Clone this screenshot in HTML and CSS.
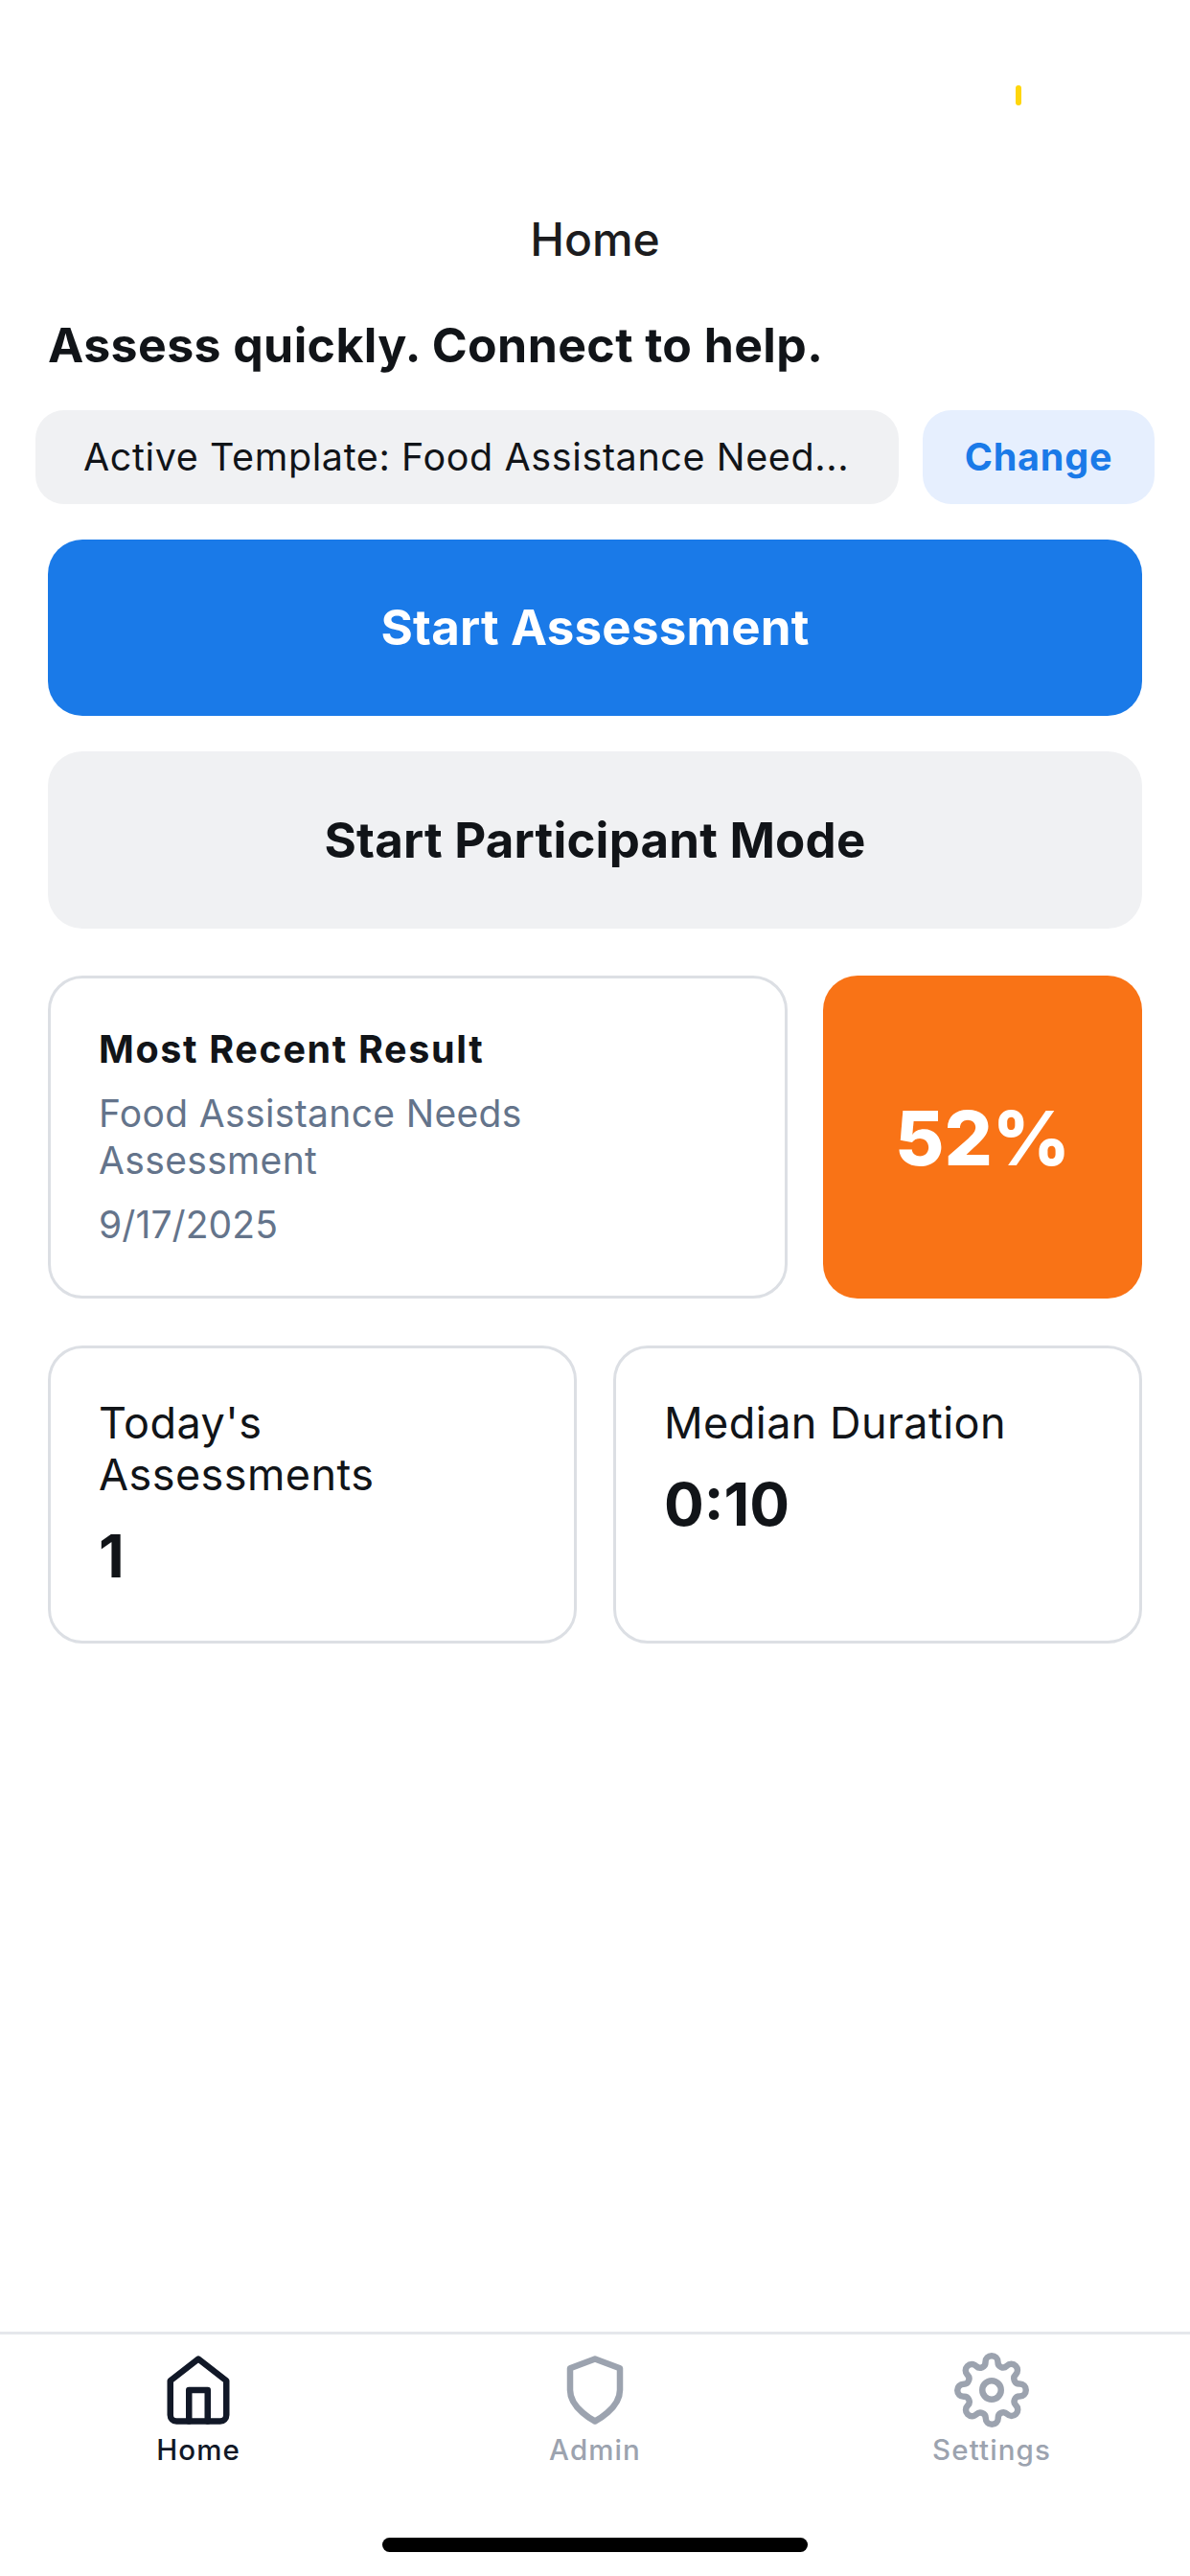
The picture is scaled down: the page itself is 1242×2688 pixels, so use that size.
FILE: index.html
```html
<!DOCTYPE html>
<html lang="en">
<head>
<meta charset="utf-8">
<title>Home</title>
<link rel="stylesheet" href="styles.css">
</head>
<body>
<div class="screen">
  <div class="status-bar"><span class="status-mark"></span></div>
  <header class="nav-title">Home</header>
  <main class="content">
    <h1 class="tagline">Assess quickly. Connect to help.</h1>
    <div class="template-row">
      <div class="template-chip">Active Template: Food Assistance Need...</div>
      <button class="change-button">Change</button>
    </div>
    <button class="action action-primary">Start Assessment</button>
    <button class="action action-secondary">Start Participant Mode</button>
    <section class="result-row">
      <article class="card result-card">
        <h2 class="result-title">Most Recent Result</h2>
        <p class="result-text">Food Assistance Needs<br>Assessment</p>
        <p class="result-text result-date">9/17/2025</p>
      </article>
      <div class="score">52%</div>
    </section>
    <section class="stats-row">
      <article class="card stat">
        <p class="stat-label">Today's<br>Assessments</p>
        <p class="stat-value">1</p>
      </article>
      <article class="card stat">
        <p class="stat-label">Median Duration</p>
        <p class="stat-value">0:10</p>
      </article>
    </section>
  </main>
  <nav class="tab-bar">
    <a class="tab tab-active">
      <svg class="tab-icon" viewBox="0 0 24 24"><path d="M3 9l9-7 9 7v11a2 2 0 0 1-2 2H5a2 2 0 0 1-2-2z"/><path d="M9 22V12h6v10"/></svg>
      <span>Home</span>
    </a>
    <a class="tab">
      <svg class="tab-icon" viewBox="0 0 24 24"><path d="M12 22s8-4 8-10V5l-8-3-8 3v7c0 6 8 10 8 10z"/></svg>
      <span>Admin</span>
    </a>
    <a class="tab">
      <svg class="tab-icon" viewBox="0 0 24 24"><circle cx="12" cy="12" r="3"/><path d="M19.4 15a1.65 1.65 0 0 0 .33 1.82l.06.06a2 2 0 0 1 0 2.83 2 2 0 0 1-2.83 0l-.06-.06a1.65 1.65 0 0 0-1.82-.33 1.65 1.65 0 0 0-1 1.51V21a2 2 0 0 1-2 2 2 2 0 0 1-2-2v-.09A1.65 1.65 0 0 0 9 19.4a1.65 1.65 0 0 0-1.82.33l-.06.06a2 2 0 0 1-2.83 0 2 2 0 0 1 0-2.83l.06-.06a1.65 1.65 0 0 0 .33-1.82 1.65 1.65 0 0 0-1.51-1H3a2 2 0 0 1-2-2 2 2 0 0 1 2-2h.09A1.65 1.65 0 0 0 4.6 9a1.65 1.65 0 0 0-.33-1.82l-.06-.06a2 2 0 0 1 0-2.83 2 2 0 0 1 2.83 0l.06.06a1.65 1.65 0 0 0 1.82.33H9a1.65 1.65 0 0 0 1-1.51V3a2 2 0 0 1 2-2 2 2 0 0 1 2 2v.09a1.65 1.65 0 0 0 1 1.51 1.65 1.65 0 0 0 1.82-.33l.06-.06a2 2 0 0 1 2.83 0 2 2 0 0 1 0 2.83l-.06.06a1.65 1.65 0 0 0-.33 1.82V9a1.65 1.65 0 0 0 1.51 1H21a2 2 0 0 1 2 2 2 2 0 0 1-2 2h-.09a1.65 1.65 0 0 0-1.51 1z"/></svg>
      <span>Settings</span>
    </a>
  </nav>
  <div class="home-indicator"></div>
</div>
</body>
</html>
```
FILE: styles.css
```css
* { box-sizing: border-box; margin: 0; }
body { background: #fff; font-family: Inter, "Liberation Sans", sans-serif; color: #111418; }
button { border: 0; font: inherit; padding: 0; }

.screen { width: 1242px; height: 2688px; display: flex; flex-direction: column; }

.status-bar { height: 132px; padding: 89px 176px 0 0; display: flex; justify-content: flex-end; }
.status-mark { width: 6px; height: 21px; border-radius: 3px; background: #ffd60a; }

.nav-title { height: 200px; padding-top: 84px; font-size: 48px; line-height: 68px; font-weight: 500; text-align: center; color: #1c1c1e; }

.content { flex: 1; display: flex; flex-direction: column; padding: 0 50px; }
.tagline { font-size: 50px; line-height: 56px; font-weight: 700; letter-spacing: 0.4px; }
.template-row { display: flex; gap: 25px; height: 98px; margin: 40px -13px 0; }
.template-chip { flex: 1; border-radius: 30px; background: #f0f1f3; padding: 0 50px; font-size: 39.5px; line-height: 98px; white-space: nowrap; letter-spacing: 0.6px; }
.change-button { width: 242px; border-radius: 30px; background: #e6effe; color: #1a7ae8; font-size: 39.5px; line-height: 98px; font-weight: 700; letter-spacing: 0.8px; }

.action { height: 184px; margin-top: 37px; border-radius: 36px; font-size: 51px; font-weight: 700; line-height: 184px; letter-spacing: 0.2px; }
.action-primary { background: #1a7ae8; color: #fff; }
.action-secondary { height: 185px; background: #f0f1f3; color: #111418; }

.card { border: 3px solid #dcdfe4; border-radius: 36px; padding: 50px; }
.result-row { display: flex; gap: 37px; margin-top: 49px; height: 337px; }
.result-card { flex: 1; }
.result-title { font-size: 39.5px; line-height: 48px; font-weight: 700; letter-spacing: 1.65px; }
.result-text { font-size: 39px; line-height: 48.5px; color: #64748b; margin-top: 19px; letter-spacing: 0.35px; }
.result-date { letter-spacing: 0.1px; }
.score { width: 333px; border-radius: 36px; background: #f97316; color: #fff; font-size: 79px; font-weight: 800; line-height: 339px; text-align: center; }

.stats-row { display: grid; grid-template-columns: 1fr 1fr; gap: 38px; margin-top: 49px; height: 311px; }
.stat { padding-top: 51px; }
.stat-label { font-size: 45px; line-height: 54px; letter-spacing: 0.45px; }
.stat-value { font-size: 62px; line-height: 74px; font-weight: 700; margin-top: 21px; }

.tab-bar { height: 215px; border-top: 3px solid #e5e7eb; display: grid; grid-template-columns: repeat(3, 1fr); }
.tab { display: flex; flex-direction: column; align-items: center; gap: 3px; padding-top: 19px; color: #9ca3af; font-size: 29.5px; line-height: 40px; font-weight: 500; letter-spacing: 1.1px; }
.tab-active { color: #111827; }
.tab-icon { width: 78px; height: 78px; fill: none; stroke: currentColor; stroke-width: 2; stroke-linecap: round; stroke-linejoin: round; }
.home-indicator { width: 444px; height: 15px; margin: 0 auto 25px; border-radius: 8px; background: #000; }
```
